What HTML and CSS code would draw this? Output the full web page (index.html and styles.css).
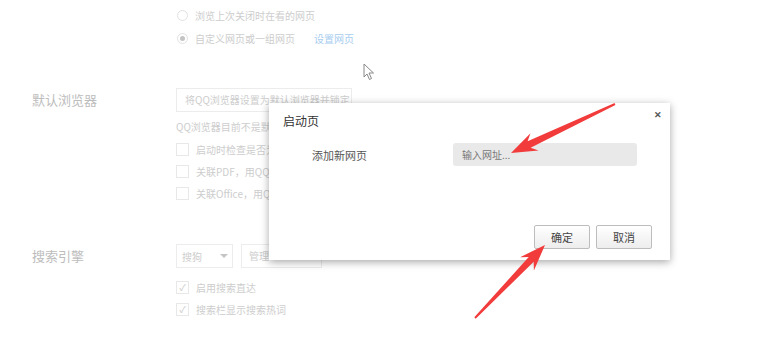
FILE: index.html
```html
<!DOCTYPE html>
<html>
    <head>
        <title>启动页</title>
        <meta charset="UTF-8"/>
        <link rel="stylesheet" href="styles.css">
    </head>
    <body>
        <div class="page">
            <div class="section">
                <div class="label"></div>
                <div class="content">
                    <div class="row"><span class="radio"></span>浏览上次关闭时在看的网页</div>
                    <div class="row"><span class="radio on"></span>自定义网页或一组网页<a class="link">设置网页</a></div>
                </div>
            </div>

            <div class="section default">
                <div class="label">默认浏览器</div>
                <div class="content">
                    <div class="btn wide">将QQ浏览器设置为默认浏览器并锁定</div>
                    <div class="note clip">QQ浏览器目前不是默认浏览器</div>
                    <div class="row clip"><span class="check"></span>启动时检查是否为默认浏览器</div>
                    <div class="row clip"><span class="check"></span>关联PDF，用QQ浏览器打开PDF文件</div>
                    <div class="row clip"><span class="check"></span>关联Office，用QQ浏览器打开Office文件</div>
                </div>
            </div>

            <div class="section search">
                <div class="label">搜索引擎</div>
                <div class="content">
                    <div class="tools">
                        <div class="select">搜狗<span class="caret"></span></div>
                        <div class="btn manage">管理</div>
                    </div>
                    <div class="row first"><span class="check ok">✓</span>启用搜索直达</div>
                    <div class="row"><span class="check ok">✓</span>搜索栏显示搜索热词</div>
                </div>
            </div>
        </div>

        <!-- 光标 -->
        <svg class="cursor" width="12" height="18" viewBox="0 0 12 18">
            <path d="M1 1 L1 14 L4 11 L6.5 16.5 L8.5 15.5 L6 10 L10.5 10 Z" fill="#fff" stroke="#888" stroke-width="1"/>
        </svg>

        <div class="dialog">
            <div class="dlg-head">
                <span class="dlg-title">启动页</span>
                <span class="dlg-close">✕</span>
            </div>
            <div class="dlg-row">
                <span class="dlg-label">添加新网页</span>
                <div class="dlg-input">输入网址...</div>
            </div>
            <div class="dlg-foot">
                <div class="dlg-btn">确定</div>
                <div class="dlg-btn">取消</div>
            </div>
        </div>

        <!-- 红色箭头 -->
        <svg class="arrows" width="776" height="337" viewBox="0 0 776 337">
            <polygon fill="#f23b3b" points="614.6,103.1 527.6,141.3 530.5,133.3 511,153 538.6,150.5 530.6,147.7 615.4,104.9"/>
            <polygon fill="#f23b3b" points="475.7,318.7 533.7,261.8 533.9,270.4 545,245 520.1,257.2 528.7,257 474.3,317.3"/>
        </svg>
    </body>
</html>
```

FILE: styles.css
```css
body {
    margin: 0;
    background: #fff;
    font-family: "Noto Sans CJK SC", "Noto Sans", sans-serif;
    font-size: 10px;
    color: #cdcdcd;
    width: 776px;
    height: 337px;
    overflow: hidden;
    position: relative;
}

.page {
    padding: 4px 0 0 32px;
}

.section {
    display: grid;
    grid-template-columns: 144px 1fr;
}

.label {
    font-size: 13px;
    line-height: 24px;
    color: #bdbdbd;
}

.row {
    display: flex;
    align-items: center;
    height: 23px;
    white-space: nowrap;
}

.default .row,
.search .row {
    height: 22px;
}

/* 被对话框挡住的部分 */
.clip {
    max-width: 93px;
    overflow: hidden;
    white-space: nowrap;
}

.radio {
    width: 11px;
    height: 11px;
    border: 1px solid #e2e2e2;
    border-radius: 50%;
    margin: 0 7px 0 1px;
    box-sizing: border-box;
    display: flex;
    align-items: center;
    justify-content: center;
}

.radio.on::after {
    content: "";
    width: 5px;
    height: 5px;
    border-radius: 50%;
    background: #c4c4c4;
}

.link {
    color: #a8cdef;
    margin-left: 19px;
}

.default {
    margin-top: 38px;
}

.btn {
    border: 1px solid #ececec;
    height: 24px;
    line-height: 22px;
    box-sizing: border-box;
    padding: 0 8px;
}

.wide {
    width: 176px;
    white-space: nowrap;
    overflow: hidden;
}

.note {
    margin-top: 4px;
    line-height: 22px;
}

.check {
    flex: none;
    width: 13px;
    height: 13px;
    border: 1px solid #e8e8e8;
    box-sizing: border-box;
    margin-right: 7px;
    font-size: 9px;
    line-height: 11px;
    text-align: center;
    color: #c8c8c8;
}

.search {
    margin-top: 40px;
}

.tools {
    display: flex;
    gap: 8px;
}

.select {
    width: 57px;
    height: 24px;
    border: 1px solid #ececec;
    box-sizing: border-box;
    padding-left: 5px;
    display: flex;
    align-items: center;
    justify-content: space-between;
}

.caret {
    width: 0;
    height: 0;
    border-left: 4px solid transparent;
    border-right: 4px solid transparent;
    border-top: 4px solid #c4c4c4;
    margin-right: 4px;
}

.manage {
    width: 81px;
    padding-left: 7px;
}

.search .row.first {
    margin-top: 8px;
}

.cursor {
    position: absolute;
    left: 363px;
    top: 63px;
}

.dialog {
    position: absolute;
    left: 269px;
    top: 103px;
    width: 401px;
    height: 157px;
    background: #fff;
    box-shadow: 0 2px 8px rgba(0, 0, 0, 0.35);
    display: flex;
    flex-direction: column;
    color: #444;
}

.dlg-head {
    display: flex;
    justify-content: space-between;
    height: 36px;
    padding: 0 8px 0 14px;
}

.dlg-title {
    font-size: 12px;
    line-height: 36px;
    color: #333;
}

.dlg-close {
    font-size: 9px;
    font-weight: bold;
    line-height: 24px;
    color: #555;
}

.dlg-row {
    display: flex;
    align-items: center;
    margin-top: 4px;
    padding-left: 43px;
}

.dlg-label {
    width: 141px;
    font-size: 11px;
    color: #555;
}

.dlg-input {
    width: 184px;
    height: 23px;
    line-height: 23px;
    background: #e9e9e9;
    border-radius: 3px;
    padding-left: 9px;
    box-sizing: border-box;
    font-size: 10px;
    color: #777;
}

.dlg-foot {
    margin-top: auto;
    display: flex;
    justify-content: flex-end;
    gap: 6px;
    padding: 0 18px 11px 0;
}

.dlg-btn {
    width: 56px;
    height: 24px;
    line-height: 22px;
    box-sizing: border-box;
    border: 1px solid #bdbdbd;
    border-radius: 2px;
    background: linear-gradient(#ffffff, #ededed);
    text-align: center;
    font-size: 11px;
    color: #444;
}

.arrows {
    position: absolute;
    left: 0;
    top: 0;
}
```
